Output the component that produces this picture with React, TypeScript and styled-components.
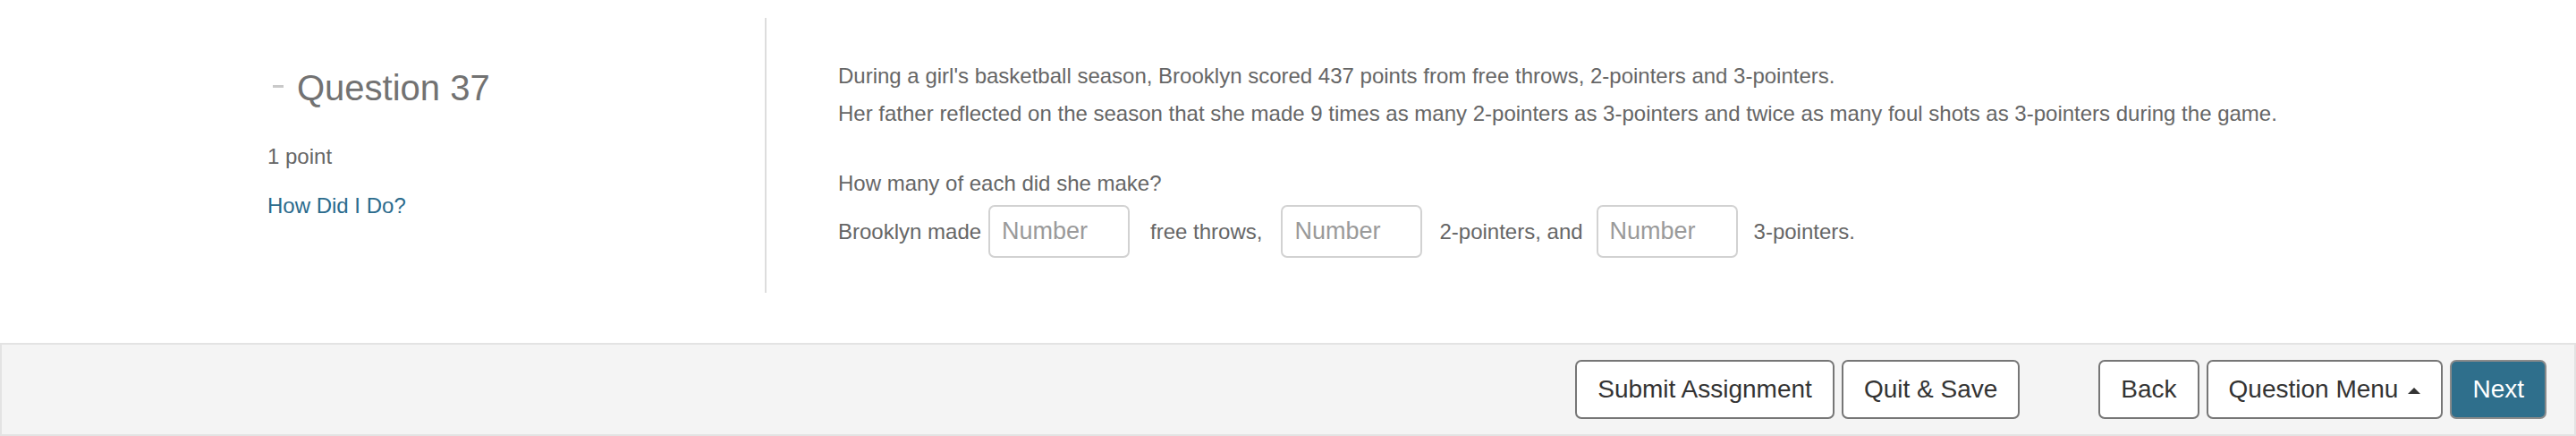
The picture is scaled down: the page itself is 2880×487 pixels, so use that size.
import React from "react";
import styled, { createGlobalStyle } from "styled-components";

const GlobalStyle = createGlobalStyle`
  html, body {
    margin: 0;
    padding: 0;
    background: #ffffff;
  }
  body {
    font-family: "Liberation Sans", Arial, Helvetica, sans-serif;
    color: #666666;
  }
  * { box-sizing: border-box; }
`;

const Page = styled.div`
  display: flex;
  flex-direction: column;
  width: 2880px;
`;

const Main = styled.main`
  display: flex;
  align-items: flex-start;
  padding: 20px 0 0 299px;
  height: 383px;
`;

const Sidebar = styled.aside`
  width: 556px;
  display: flex;
  flex-direction: column;
  padding-top: 54px;
`;

const Heading = styled.h2`
  display: flex;
  align-items: center;
  margin: 0;
  font-size: 40px;
  line-height: 48px;
  font-weight: 400;
  color: #727272;
`;

const Collapse = styled.span`
  display: block;
  width: 12px;
  height: 3px;
  margin: 0 15px 0 6px;
  background: #c9c9c9;
  position: relative;
  top: -2px;
`;

const Meta = styled.div<{ $gap: number }>`
  margin-top: ${(p) => p.$gap}px;
  font-size: 24px;
  line-height: 36px;
  color: #666666;
`;

const HelpLink = styled.a`
  color: #2b6b8d;
  text-decoration: none;
`;

const Content = styled.section`
  height: 307px;
  border-left: 2px solid #dddddd;
  padding: 44px 0 0 80px;
  font-size: 24px;
  color: #666666;
`;

const Line = styled.p<{ $mt?: number }>`
  margin: ${(p) => p.$mt ?? 0}px 0 0 0;
  line-height: 42px;
  white-space: nowrap;
`;

const AnswerRow = styled.div`
  display: flex;
  align-items: center;
  margin-top: 3px;
  line-height: 42px;
  white-space: nowrap;
`;

const Blank = styled.input<{ $ml: number; $mr: number }>`
  width: 158px;
  height: 59px;
  margin: 0 ${(p) => p.$mr}px 0 ${(p) => p.$ml}px;
  padding: 0 13px;
  border: 2px solid #d2d2d2;
  border-radius: 7px;
  font-family: "Liberation Sans", Arial, Helvetica, sans-serif;
  font-size: 27px;
  color: #555555;
  background: #ffffff;
  outline: none;
  &::placeholder {
    color: #9a9a9a;
  }
`;

const Footer = styled.footer`
  display: flex;
  justify-content: flex-end;
  align-items: center;
  height: 104px;
  background: #f4f4f4;
  border: 2px solid #e3e3e3;
  padding-right: 31px;
`;

const ButtonGroup = styled.div<{ $mr?: number }>`
  display: flex;
  gap: 8px;
  margin-right: ${(p) => p.$mr ?? 0}px;
`;

const Button = styled.button<{ $primary?: boolean }>`
  display: flex;
  align-items: center;
  gap: 11px;
  height: 66px;
  padding: 0 23px;
  border: 2px solid ${(p) => (p.$primary ? "#8a8a8a" : "#767676")};
  border-radius: 7px;
  background: ${(p) => (p.$primary ? "#2f6f8c" : "#ffffff")};
  color: ${(p) => (p.$primary ? "#ffffff" : "#333333")};
  font-family: "Liberation Sans", Arial, Helvetica, sans-serif;
  font-size: 28px;
  line-height: 1;
  cursor: pointer;
`;

const Caret = styled.span`
  display: block;
  width: 0;
  height: 0;
  border-left: 7px solid transparent;
  border-right: 7px solid transparent;
  border-bottom: 7px solid #333333;
  margin-top: 2px;
`;

export default function App() {
  return (
    <>
      <GlobalStyle />
      <Page>
        <Main>
          <Sidebar>
            <Heading>
              <Collapse />
              Question 37
            </Heading>
            <Meta $gap={35}>1 point</Meta>
            <Meta $gap={19}>
              <HelpLink href="#">How Did I Do?</HelpLink>
            </Meta>
          </Sidebar>
          <Content>
            <Line>
              During a girl's basketball season, Brooklyn scored 437 points from free throws, 2-pointers and 3-pointers.
            </Line>
            <Line>
              Her father reflected on the season that she made 9 times as many 2-pointers as 3-pointers and twice as many foul shots as 3-pointers during the game.
            </Line>
            <Line $mt={36}>How many of each did she make?</Line>
            <AnswerRow>
              <span>Brooklyn made</span>
              <Blank $ml={8} $mr={23} placeholder="Number" />
              <span>free throws,</span>
              <Blank $ml={21} $mr={19} placeholder="Number" />
              <span>2-pointers, and</span>
              <Blank $ml={15} $mr={18} placeholder="Number" />
              <span>3-pointers.</span>
            </AnswerRow>
          </Content>
        </Main>
        <Footer>
          <ButtonGroup $mr={88}>
            <Button>Submit Assignment</Button>
            <Button>Quit &amp; Save</Button>
          </ButtonGroup>
          <ButtonGroup>
            <Button>Back</Button>
            <Button>
              Question Menu
              <Caret />
            </Button>
            <Button $primary>Next</Button>
          </ButtonGroup>
        </Footer>
      </Page>
    </>
  );
}
